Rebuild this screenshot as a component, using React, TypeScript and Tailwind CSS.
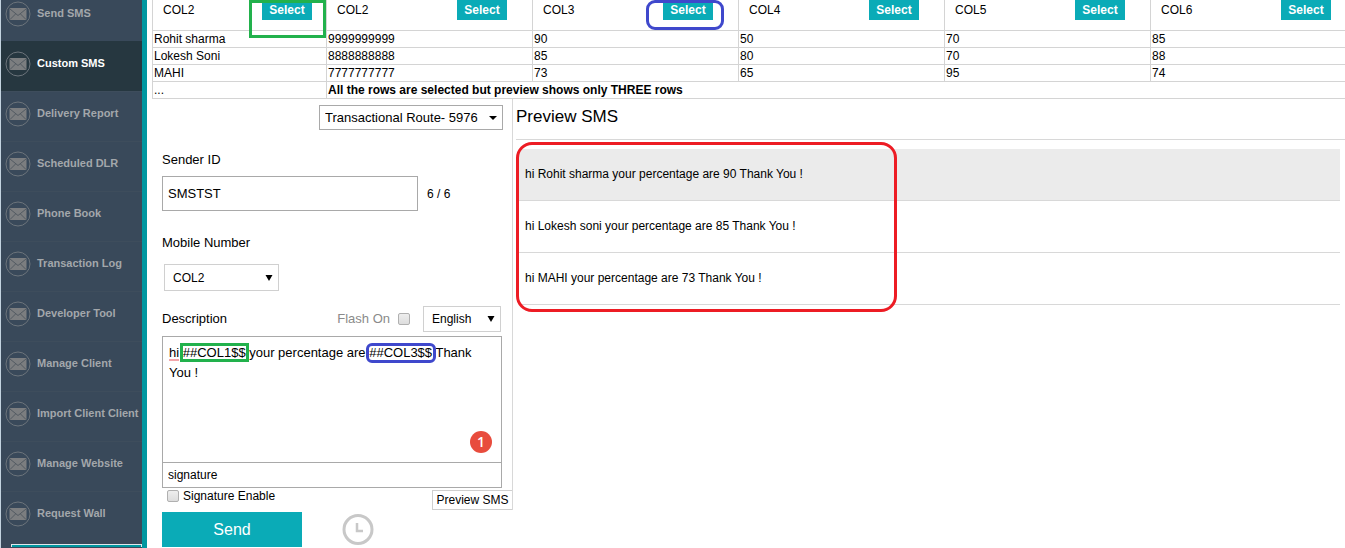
import type { ReactNode } from "react";

const menu = [
    "Send SMS",
    "Custom SMS",
    "Delivery Report",
    "Scheduled DLR",
    "Phone Book",
    "Transaction Log",
    "Developer Tool",
    "Manage Client",
    "Import Client Client",
    "Manage Website",
    "Request Wall",
];

const columns = ["COL2", "COL2", "COL3", "COL4", "COL5", "COL6"];

const rows = [
    ["Rohit sharma", "9999999999", "90", "50", "70", "85"],
    ["Lokesh Soni", "8888888888", "85", "80", "70", "88"],
    ["MAHI", "7777777777", "73", "65", "95", "74"],
];

const messages = [
    "hi Rohit sharma your percentage are 90 Thank You !",
    "hi Lokesh soni your percentage are 85 Thank You !",
    "hi MAHI your percentage are 73 Thank You !",
];

const MailIcon = () => (
    <svg className="size-[26px] shrink-0" viewBox="0 0 26 26" fill="none">
        <circle cx="13" cy="13" r="12" stroke="#6c747b" />
        <rect x="4.5" y="7" width="17" height="12" rx="1" fill="#7c7e80" />
        <path d="M5 8l8 6.5L21 8M5 18.500l5.500-5.500M21 18.500L15.500 13" stroke="#525a62" />
    </svg>
);

const Sidebar = () => (
    <nav className="w-[147px] shrink-0 overflow-hidden border-l border-[#c3d3df] border-r-[5px] border-r-[#0097a0] bg-[#39495a]">
        <ul className="-mt-[9px]">
            {menu.map((item) => (
                <li key={item}>
                    <a
                        href="#"
                        className={`flex h-[50px] items-center gap-[6px] border-t pb-[6px] pl-[4px] text-[11px] font-bold whitespace-nowrap ${
                            item === "Custom SMS"
                                ? "border-[#263740] bg-[#263740] text-white"
                                : "border-[#3e4d5c] text-[#a3a7ab]"
                        }`}
                    >
                        <MailIcon />
                        {item}
                    </a>
                </li>
            ))}
        </ul>
        <div className="mt-[3px] ml-[10px] h-[3px] border border-b-0 border-[#dfe8ec] bg-[#0097a0]" />
    </nav>
);

const DataTable = () => (
    <table className="w-full table-fixed border-separate border-spacing-0 text-[12px] leading-[16px]">
        <colgroup>
            <col className="w-[174px]" />
            <col className="w-[206px]" />
            <col className="w-[206px]" />
            <col className="w-[206px]" />
            <col className="w-[206px]" />
            <col />
        </colgroup>
        <thead>
            <tr>
                {columns.map((col, i) => (
                    <th key={i} className="h-[31px] border-b border-l border-[#d4d4d4] p-0 align-top font-normal">
                        <div className={`flex h-5 items-center justify-between pl-[10px] ${i === 0 || i === 5 ? "pr-[14px]" : "pr-[25px]"}`}>
                            {col}
                            <span className="relative">
                                <button className="block h-5 w-[50px] bg-[#0aabb7] font-bold text-white">Select</button>
                                {i === 0 && <span className="pointer-events-none absolute top-0 -right-[14px] h-[38px] w-[77px] border-3 border-[#22b14c]" />}
                                {i === 2 && <span className="pointer-events-none absolute top-0 -right-[11px] h-[30px] w-[78px] rounded-[9px] border-3 border-[#3f48cc]" />}
                            </span>
                        </div>
                    </th>
                ))}
            </tr>
        </thead>
        <tbody>
            {rows.map((row) => (
                <tr key={row[0]}>
                    {row.map((cell, i) => (
                        <td key={i} className="border-b border-l border-[#d4d4d4] py-0 pr-0 pl-px">{cell}</td>
                    ))}
                </tr>
            ))}
            <tr>
                <td className="border-b border-l border-[#d4d4d4] py-0 pr-0 pl-px">...</td>
                <td colSpan={5} className="border-b border-l border-[#d4d4d4] py-0 pr-0 pl-px font-bold">
                    All the rows are selected but preview shows only THREE rows
                </td>
            </tr>
        </tbody>
    </table>
);

type SelectProps = {
    id: string;
    label?: string;
    value: string;
    className: string;
    caret?: ReactNode;
};

const Select = ({ id, label, value, className, caret }: SelectProps) => (
    <div className={`relative ${className}`}>
        <select id={id} aria-label={label} className="size-full appearance-none border border-inherit bg-white">
            <option>{value}</option>
        </select>
        <svg className="pointer-events-none absolute top-1/2 right-[6px] h-[6px] w-[8px] -translate-y-1/2" viewBox="0 0 8 6">
            {caret ?? <path d="M0.500 0h7L4 6z" fill="#000" />}
        </svg>
    </div>
);

const checkbox =
    "size-[12px] appearance-none rounded-[2px] border border-[#b0b0b0] bg-linear-to-b from-[#eee] to-[#ddd]";

const SmsForm = () => (
    <form className="w-[361px] shrink-0 text-[13px] leading-[20px]" onSubmit={(e) => e.preventDefault()}>
        <div className="border-r border-[#d8d8d8] pl-[10px]">
            <div className="flex justify-end pt-[6px] pr-[9px]">
                <Select
                    id="route"
                    label="Route"
                    value="Transactional Route- 5976"
                    className="h-[25px] w-[184px] border-[#a9a9a9] [&>select]:pl-[5px]"
                    caret={<path d="M0 1h8L4 5z" fill="#000" />}
                />
            </div>
            <label htmlFor="sender" className="mt-[20px] block">Sender ID</label>
            <div className="mt-[6px] flex items-center gap-[9px]">
                <input id="sender" defaultValue="SMSTST" className="h-[35px] w-[256px] border border-[#a9a9a9] px-[5px]" />
                <span className="text-[12px]">6 / 6</span>
            </div>
            <label htmlFor="mobile" className="mt-[22px] block">Mobile Number</label>
            <Select
                id="mobile"
                value="COL2"
                className="mt-[11px] ml-[2px] h-[27px] w-[115px] border-[#d0d0d0] text-[12px] [&>select]:pl-[8px]"
            />
            <div className="mt-[15px] flex items-center pr-[11px]">
                <label htmlFor="description" className="grow">Description</label>
                <label htmlFor="flash" className="text-[#8a8a8a]">Flash On</label>
                <input id="flash" type="checkbox" className={`mr-[13px] ml-[8px] ${checkbox}`} />
                <Select
                    id="language"
                    label="Language"
                    value="English"
                    className="h-[26px] w-[78px] border-[#d0d0d0] text-[12px] [&>select]:pl-[8px]"
                />
            </div>
            <div className="relative mt-[4px] mr-[10px]">
                <textarea
                    id="description"
                    spellCheck={false}
                    defaultValue={"hi ##COL1$$ your percentage are ##COL3$$ Thank You !"}
                    className="block h-[127px] w-full resize-none border border-[#a9a9a9] px-[6px] py-[6px]"
                />
                <span className="pointer-events-none absolute top-[23px] left-[7px] h-[2px] w-[10px] bg-[#f3a6ab]" />
                <span className="pointer-events-none absolute top-[7px] left-[18px] h-[19px] w-[69px] border-3 border-[#22b14c]" />
                <span className="pointer-events-none absolute top-[7px] left-[204px] h-[20px] w-[70px] rounded-[6px] border-3 border-[#3f48cc]" />
                <span className="absolute right-[10px] bottom-[10px] flex size-[22px] items-center justify-center rounded-full bg-[#e84c3d] font-['Open_Sans',sans-serif] text-[14px] font-semibold text-white">
                    1
                </span>
            </div>
            <input
                aria-label="Signature"
                defaultValue="signature"
                className="-mt-px block h-[26px] w-[340px] border border-[#a9a9a9] px-[5px] text-[12px]"
            />
            <div className="flex items-start justify-between text-[12px] leading-[16px]">
                <label className="flex items-center gap-[4px] pl-[5px]">
                    <input type="checkbox" className={checkbox} />
                    Signature Enable
                </label>
                <button className="mt-[2px] h-[20px] w-[80px] border border-r-0 border-[#cfcfcf] text-[12px]">Preview SMS</button>
            </div>
        </div>
        <div className="mt-[2px] flex items-center gap-[40px] pl-[10px]">
            <button className="h-[35px] w-[140px] bg-[#0aabb7] text-[16px] text-white">Send</button>
            <button aria-label="Schedule">
                <svg className="size-[32px]" viewBox="0 0 32 32" fill="none" stroke="#c8c8c8" strokeWidth="3">
                    <circle cx="16" cy="15.5" r="14" />
                    <path d="M15 9v8h6" strokeWidth="2.500" />
                </svg>
            </button>
        </div>
    </form>
);

const Preview = () => (
    <section className="grow pl-[3px]">
        <h2 className="border-b border-[#d8d8d8] pt-[6px] pb-[10px] text-[17px] leading-[24px]">Preview SMS</h2>
        <div className="relative pt-[9px] pr-[5px] pl-[3px] text-[12px] leading-[20px]">
            {messages.map((message, i) => (
                <p
                    key={message}
                    className={`border-b border-[#d8d8d8] px-[6px] pt-[15px] pb-[16px] ${i === 0 ? "bg-[#ebebeb]" : ""}`}
                >
                    {message}
                </p>
            ))}
            <span className="pointer-events-none absolute top-[2px] left-0 h-[170px] w-[381px] rounded-[16px] border-3 border-[#ed1c24]" />
        </div>
    </section>
);

const App = () => {
    return (
        <div className="flex min-h-screen bg-white font-['Liberation_Sans',Arial,sans-serif] text-black">
            <Sidebar />
            <main className="min-w-0 grow pl-[5px]">
                <DataTable />
                <div className="flex">
                    <SmsForm />
                    <Preview />
                </div>
            </main>
        </div>
    );
};

export default App;
